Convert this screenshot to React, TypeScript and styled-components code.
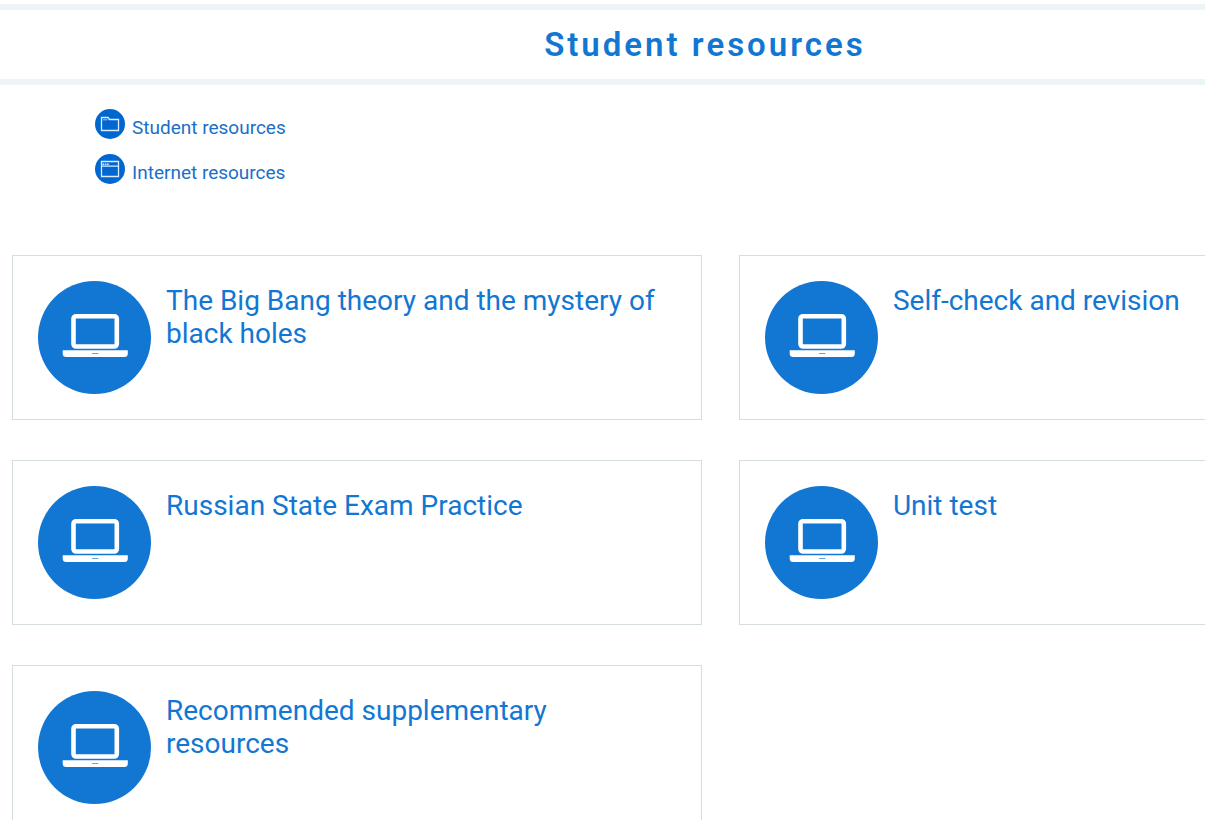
import React from "react";
import styled, { createGlobalStyle } from "styled-components";

const GlobalStyle = createGlobalStyle`
  body {
    margin: 0;
    background: #fff;
    color: #1277d3;
    font-family: Roboto, "Liberation Sans", sans-serif;
  }
  #root { overflow: hidden; }
`;

const Page = styled.main`
  width: 117%;
  padding: 4px 0 40px;
`;

const Title = styled.h1`
  margin: 0;
  padding: 15px 0 14px;
  border: solid #ecf4f7;
  border-width: 6px 0;
  font-size: 33px;
  line-height: 40px;
  font-weight: 600;
  letter-spacing: 3px;
  text-align: center;
`;

const Links = styled.nav`
  display: flex;
  flex-direction: column;
  align-items: flex-start;
  gap: 15px;
  padding: 24px 95px 71px;
`;

const NavLink = styled.a`
  display: flex;
  gap: 7px;
  color: #1a6fc9;
  font-size: 19px;
  line-height: 38px;
  height: 30px;
  text-decoration: none;
`;

const Grid = styled.section`
  display: grid;
  grid-template-columns: 1fr 1fr;
  gap: 40px 37px;
  margin: 0 -19px 0 12px;
`;

const Card = styled.a`
  display: flex;
  align-items: flex-start;
  gap: 15px;
  padding: 25px;
  border: 1px solid #d6dddf;
  color: inherit;
  text-decoration: none;
`;

const CardTitle = styled.h2`
  flex: 1;
  margin: 0;
  padding-top: 3px;
  font-size: 28px;
  line-height: 33px;
  font-weight: 400;
`;

const Icon = styled.svg`
  display: block;
  flex: none;
`;

const FolderIcon = () => (
  <Icon width="30" height="30" viewBox="0 0 30 30" aria-hidden="true">
    <circle cx="15" cy="15" r="15" fill="#0067d0" />
    <path d="M6.5 21.5V8.5H13L14.5 10.5H23.5V21.5Z" fill="none" stroke="#dcecff" strokeWidth="1.3" />
    <path d="M8 10.8H12.5" stroke="#9cc6f0" />
  </Icon>
);

const WindowIcon = () => (
  <Icon width="30" height="30" viewBox="0 0 30 30" aria-hidden="true">
    <circle cx="15" cy="15" r="15" fill="#0067d0" />
    <path d="M6.5 7.5H23.5V22.5H6.5ZM6.5 12.2H23.5" fill="none" stroke="#dcecff" strokeWidth="1.3" />
    <path d="M7.5 10.2H14.5" stroke="#dcecff" strokeWidth="1.6" strokeDasharray="1.6 .7" />
  </Icon>
);

const LaptopIcon = () => (
  <Icon width="113" height="113" viewBox="0 0 113 113" aria-hidden="true">
    <circle cx="56.5" cy="56.5" r="56.5" fill="#1277d3" />
    <rect x="35.5" y="35.2" width="43.3" height="30.3" rx="2.5" fill="none" stroke="#fff" strokeWidth="4.6" />
    <path d="M24.7 69.3H89.8V72.5Q89.8 76 86.3 76H28.2Q24.7 76 24.7 72.5Z" fill="#fff" />
    <rect x="54" y="72" width="6.5" height="1" rx=".5" fill="#5ca2e1" />
  </Icon>
);

const resources = [
  "The Big Bang theory and the mystery of black holes",
  "Self-check and revision",
  "Russian State Exam Practice",
  "Unit test",
  "Recommended supplementary resources",
];

export default function App() {
  return (
    <>
      <GlobalStyle />
      <Page>
        <Title>Student resources</Title>
        <Links>
          <NavLink href="#student"><FolderIcon />Student resources</NavLink>
          <NavLink href="#internet"><WindowIcon />Internet resources</NavLink>
        </Links>
        <Grid id="student">
          {resources.map((name) => (
            <Card href="#resource" key={name}>
              <LaptopIcon />
              <CardTitle>{name}</CardTitle>
            </Card>
          ))}
        </Grid>
      </Page>
    </>
  );
}
